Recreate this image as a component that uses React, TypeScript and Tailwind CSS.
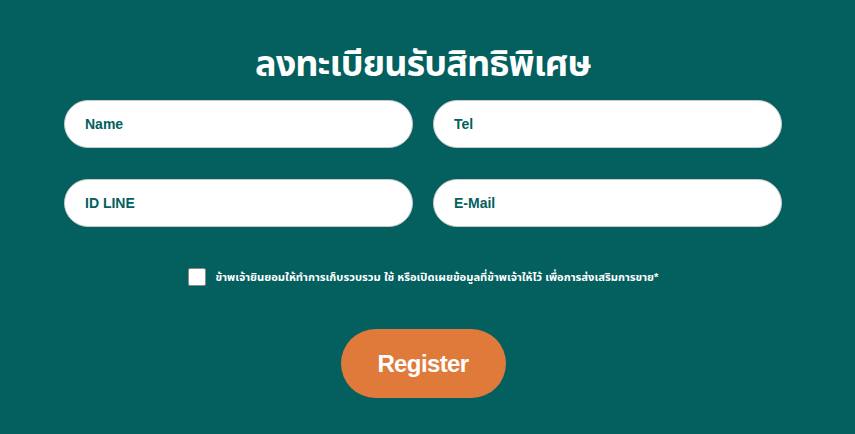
import React, { useState } from "react";

const fields = [
  { name: "name", placeholder: "Name" },
  { name: "tel", placeholder: "Tel" },
  { name: "line", placeholder: "ID LINE" },
  { name: "email", placeholder: "E-Mail" },
];

const App: React.FC = () => {
  const [agree, setAgree] = useState(false);

  return (
    <div
      className="min-h-screen w-full bg-[#03605f] overflow-hidden"
      style={{ fontFamily: '"Liberation Sans", "Noto Sans", "Noto Sans Thai", sans-serif' }}
    >
      <div className="ml-[64px] w-[718px] flex flex-col items-center pt-[37px]">
        <h2 className="text-[36px] leading-[54px] font-bold text-white tracking-tight">
          ลงทะเบียนรับสิทธิพิเศษ
        </h2>

        {/* Form fields */}
        <div className="mt-[9px] w-full grid grid-cols-2 gap-x-[20px] gap-y-[31px]">
          {fields.map((f) => (
            <input
              key={f.name}
              name={f.name}
              placeholder={f.placeholder}
              className="h-[48px] w-full rounded-full bg-white border border-[#c9c9c9] px-[20px] text-[14px] font-bold text-[#03605f] placeholder:text-[#03605f] outline-none"
            />
          ))}
        </div>

        {/* Consent */}
        <label className="mt-[41px] flex items-center gap-[10px] cursor-pointer">
          <input
            type="checkbox"
            checked={agree}
            onChange={(e) => setAgree(e.target.checked)}
            className="appearance-none w-[18px] h-[18px] bg-white border border-[#8a8a8a] rounded-[2px] checked:bg-[#e07a3a]"
          />
          <span className="text-[11.2px] font-bold text-white">
            ข้าพเจ้ายินยอมให้ทำการเก็บรวบรวม ใช้ หรือเปิดเผยข้อมูลที่ข้าพเจ้าให้ไว้ เพื่อการส่งเสริมการขาย*
          </span>
        </label>

        <button className="mt-[43px] w-[165px] h-[69px] rounded-full bg-[#e07a3a] text-white text-[24px] font-bold tracking-tight">
          Register
        </button>
      </div>
    </div>
  );
};

export default App;
